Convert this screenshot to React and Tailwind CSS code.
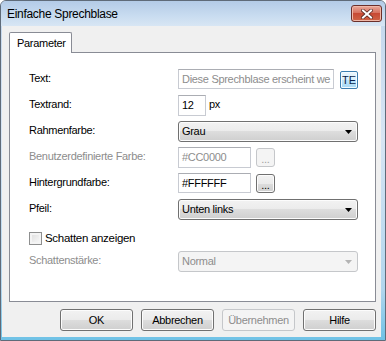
import React from "react";

const F = "font-['Liberation_Sans',Arial,sans-serif] text-[11px] tracking-[-0.3px] leading-[13px]";
const BTN_BG = "bg-[linear-gradient(#f2f2f2,#ebebeb_50%,#dddddd_50%,#cfcfcf)] shadow-[inset_0_0_0_1px_#fcfcfc]";

function Arrow({ color = "#000" }) {
  return (
    <svg width="7" height="4" viewBox="0 0 7 4">
      <polygon points="0,0 7,0 3.5,4" fill={color} />
    </svg>
  );
}

function Combo({ value, disabled }) {
  return (
    <div
      className={`w-[180px] h-[21px] rounded-[3px] border flex items-center justify-between pl-[3px] pr-[5px] ${
        disabled
          ? "border-[#c5c7ca] bg-[#f4f4f4] text-[#8d8d8d]"
          : `border-[#707070] ${BTN_BG} text-black`
      }`}
    >
      <span>{value}</span>
      <Arrow color={disabled ? "#b4b4b4" : "#000"} />
    </div>
  );
}

function TextBox({ value, w, disabled, h = "h-[21px]" }) {
  return (
    <div
      className={`${w} ${h} border border-[#c8cbd2] border-t-[#abadb3] bg-white flex items-center pl-[3px] overflow-hidden whitespace-nowrap ${
        disabled ? "text-[#8d8d8d]" : "text-black"
      }`}
    >
      {value}
    </div>
  );
}

function DotsBtn({ disabled }) {
  return (
    <div
      className={`mt-[1px] w-[19px] h-[19px] rounded-[3px] border flex items-end justify-center pb-[3px] ${
        disabled ? "border-[#c5c7ca] bg-[#f4f4f4] text-[#a0a0a0]" : `border-[#707070] ${BTN_BG} text-black`
      }`}
    >
      <span className="leading-[8px]">...</span>
    </div>
  );
}

function Row({ label, disabled, children }) {
  return (
    <div className="h-[26px] flex items-start">
      <div className={`w-[149px] pt-[3px] ${disabled ? "text-[#8d8d8d]" : "text-black"}`}>{label}</div>
      <div className="flex items-start">{children}</div>
    </div>
  );
}

function Button({ label, disabled }) {
  return (
    <div
      className={`w-[73px] h-[22px] rounded-[3px] border flex items-center justify-center ${
        disabled ? "border-[#c5c7ca] bg-[#f4f4f4] text-[#8d8d8d]" : `border-[#707070] ${BTN_BG} text-black`
      }`}
    >
      {label}
    </div>
  );
}

export default function App() {
  return (
    <div className="w-[386px] h-[341px] bg-white">
      <div className="w-full h-full flex flex-col rounded-t-[6px] border border-[#5f6b79] overflow-hidden bg-[linear-gradient(#c2d6ec,#d7e5f4_40%,#b2d6ee_85%,#6fc2e6)]">
        {/* Title bar */}
        <div className="h-[25px] shrink-0 flex items-start justify-between pl-[6px] pr-[3px] bg-[linear-gradient(#b3cbe7,#c9dcf0_60%,#d8e6f4)]">
          <span className="pt-[6px] font-['Liberation_Sans',Arial,sans-serif] text-[12px] tracking-[-0.3px] leading-[14px] text-black">
            Einfache Sprechblase
          </span>
          <div className="mt-[4px] w-[31px] h-[17px] rounded-[3px] border border-[#6b2f2a] bg-[linear-gradient(#e9a99a,#d7725f_45%,#c74a34_50%,#cf6446)] shadow-[inset_0_0_0_1px_#f0b8a8] flex items-center justify-center">
            <svg width="12" height="10" viewBox="0 0 12 10">
              <path d="M2 1.5 L10 8.5 M10 1.5 L2 8.5" stroke="#5a2a24" strokeWidth="3.6" strokeLinecap="square" />
              <path d="M2 1.5 L10 8.5 M10 1.5 L2 8.5" stroke="#ffffff" strokeWidth="2" strokeLinecap="square" />
            </svg>
          </div>
        </div>
        {/* Client frame */}
        <div className="flex-1 flex pl-[1px] pr-[4px] pb-[3px]">
          <div className={`flex-1 bg-[#f0f0f0] flex flex-col pt-[6px] pl-[7px] ${F}`}>
            {/* Tab */}
            <div className="flex">
              <div className="relative z-10 -mb-[1px] w-[63px] h-[21px] bg-white border border-b-0 border-[#898c95] rounded-t-[2px] pl-[7px] pt-[4px] text-black">
                Parameter
              </div>
            </div>
            {/* Panel */}
            <div className="w-[367px] h-[250px] border border-[#898c95] bg-white pt-[16px] pl-[19px] flex flex-col">
              <Row label="Text:">
                <TextBox value="Diese Sprechblase erscheint we" w="w-[156px]" h="h-[20px]" disabled />
                <div className="ml-[6px] mt-[2px] w-[18px] h-[18px] rounded-[2px] border border-[#3c7fb1] bg-[linear-gradient(#eaf6fd,#d9f0fc_50%,#bee6fd_50%,#a7d9f5)] shadow-[inset_0_0_0_1px_#f4fbff] flex items-center justify-center text-[#0b1f4a] tracking-[0px]">
                  TE
                </div>
              </Row>
              <Row label="Textrand:">
                <TextBox value="12" w="w-[28px]" />
                <span className="ml-[3px] pt-[3px]">px</span>
              </Row>
              <Row label="Rahmenfarbe:">
                <Combo value="Grau" />
              </Row>
              <Row label="Benutzerdefinierte Farbe:" disabled>
                <TextBox value="#CC0000" w="w-[73px]" disabled />
                <div className="ml-[5px]">
                  <DotsBtn disabled />
                </div>
              </Row>
              <Row label="Hintergrundfarbe:">
                <TextBox value="#FFFFFF" w="w-[73px]" h="h-[20px]" />
                <div className="ml-[5px]">
                  <DotsBtn />
                </div>
              </Row>
              <Row label="Pfeil:">
                <Combo value="Unten links" />
              </Row>
              <div className="h-[26px] flex items-center">
                <div className="w-[13px] h-[13px] border border-[#8e8f8f] bg-[linear-gradient(135deg,#dcdcdc,#fbfbfb)] shadow-[inset_0_0_0_2px_#f4f4f4]" />
                <span className="ml-[3px] text-[11.5px] text-black">Schatten anzeigen</span>
              </div>
              <Row label="Schattenstärke:" disabled>
                <Combo value="Normal" disabled />
              </Row>
            </div>
            {/* Buttons */}
            <div className="flex gap-[8px] pl-[51px] mt-[7px]">
              <Button label="OK" />
              <Button label="Abbrechen" />
              <Button label="Übernehmen" disabled />
              <Button label="Hilfe" />
            </div>
          </div>
        </div>
      </div>
    </div>
  );
}
